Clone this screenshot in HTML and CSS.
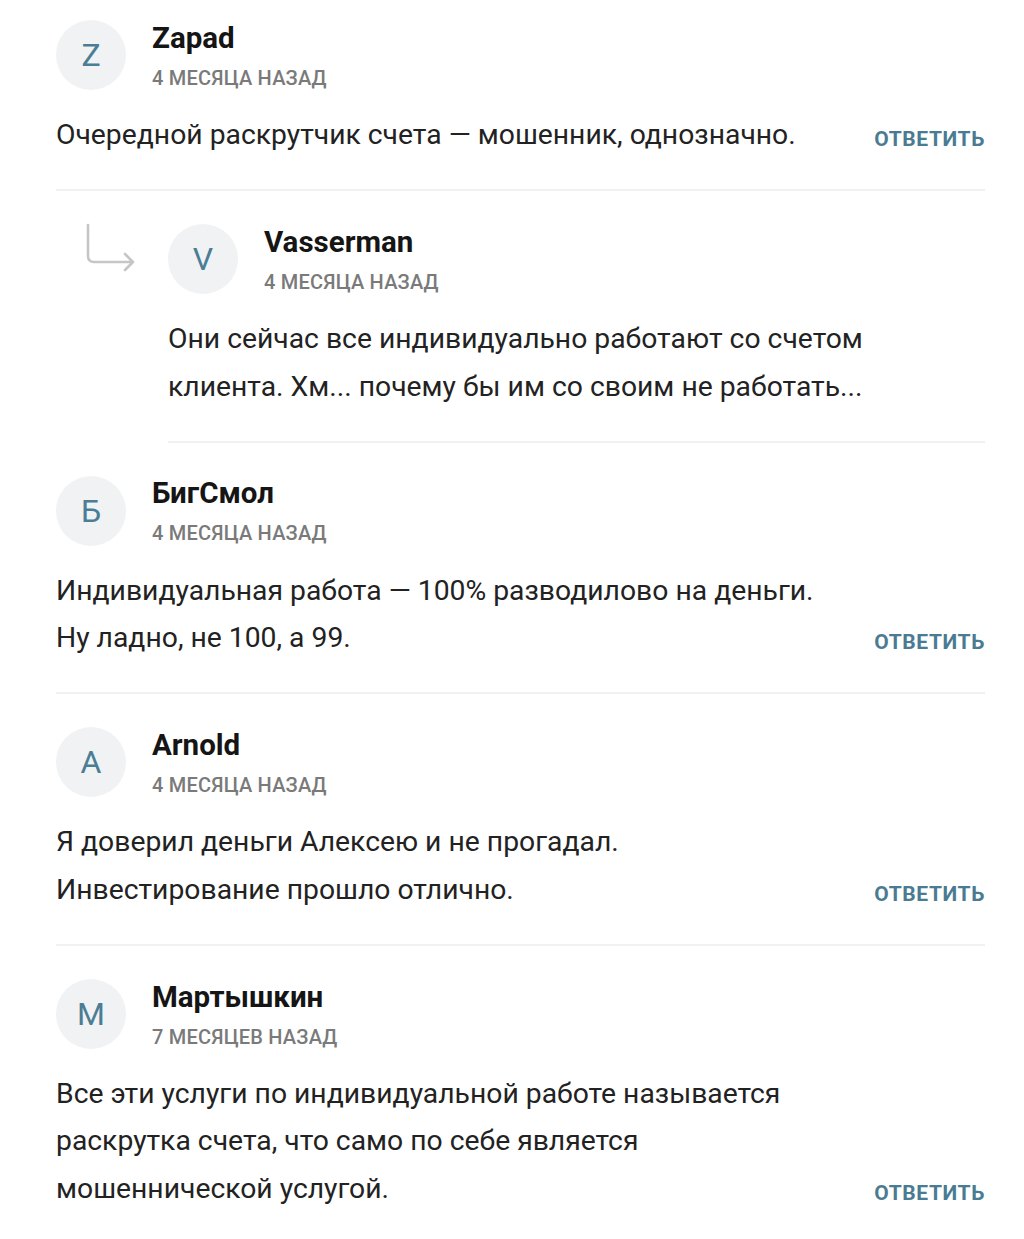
FILE: index.html
```html
<!DOCTYPE html>
<html lang="ru">
<head>
<meta charset="utf-8">
<title>Комментарии</title>
<link rel="stylesheet" href="styles.css">
</head>
<body>
<div class="comments">

  <div class="comment">
    <div class="head">
      <div class="avatar">Z</div>
      <div class="meta">
        <div class="name">Zapad</div>
        <div class="date">4 месяца назад</div>
      </div>
    </div>
    <div class="body">
      <p class="text">Очередной раскрутчик счета — мошенник, однозначно.</p>
      <a class="reply">Ответить</a>
    </div>
  </div>

  <div class="comment child">
    <svg class="arrow" width="54" height="52" viewBox="0 0 54 52">
      <path d="M4 2 V33 Q4 39 10 39 H49 M41 31 L49 39 L41 47" fill="none" stroke="#c6c6c6" stroke-width="2.6" stroke-linecap="round" stroke-linejoin="round"/>
    </svg>
    <div class="head">
      <div class="avatar">V</div>
      <div class="meta">
        <div class="name">Vasserman</div>
        <div class="date">4 месяца назад</div>
      </div>
    </div>
    <div class="body">
      <p class="text">Они сейчас все индивидуально работают со счетом<br>клиента. Хм... почему бы им со своим не работать...</p>
    </div>
  </div>

  <div class="comment">
    <div class="head">
      <div class="avatar">Б</div>
      <div class="meta">
        <div class="name">БигСмол</div>
        <div class="date">4 месяца назад</div>
      </div>
    </div>
    <div class="body">
      <p class="text">Индивидуальная работа — 100% разводилово на деньги.<br>Ну ладно, не 100, а 99.</p>
      <a class="reply">Ответить</a>
    </div>
  </div>

  <div class="comment">
    <div class="head">
      <div class="avatar">A</div>
      <div class="meta">
        <div class="name">Arnold</div>
        <div class="date">4 месяца назад</div>
      </div>
    </div>
    <div class="body">
      <p class="text">Я доверил деньги Алексею и не прогадал.<br>Инвестирование прошло отлично.</p>
      <a class="reply">Ответить</a>
    </div>
  </div>

  <div class="comment last">
    <div class="head">
      <div class="avatar">M</div>
      <div class="meta">
        <div class="name">Мартышкин</div>
        <div class="date">7 месяцев назад</div>
      </div>
    </div>
    <div class="body">
      <p class="text">Все эти услуги по индивидуальной работе называется<br>раскрутка счета, что само по себе является<br>мошеннической услугой.</p>
      <a class="reply">Ответить</a>
    </div>
  </div>

</div>
</body>
</html>
```

FILE: styles.css
```css
* { box-sizing: border-box; }

html, body {
  margin: 0;
  padding: 0;
  background: #ffffff;
}

body {
  font-family: Roboto, "Noto Sans", "Liberation Sans", sans-serif;
  color: #222222;
}

.comments {
  width: 985px;
  padding: 20px 0 0 56px;
}

.comment {
  position: relative;
  padding-bottom: 31px;
  margin-bottom: 33px;
  border-bottom: 2px solid #f1f1f1;
}

.comment.child {
  margin-left: 112px;
}

.comment.last {
  border-bottom: none;
}

.arrow {
  position: absolute;
  left: -84px;
  top: -1px;
}

.head {
  display: flex;
  align-items: center;
  gap: 26px;
}

.avatar {
  width: 70px;
  height: 70px;
  border-radius: 50%;
  background: #f0f2f4;
  color: #4b7d94;
  font-size: 32px;
  display: flex;
  align-items: center;
  justify-content: center;
  flex-shrink: 0;
}

.meta {
  display: flex;
  flex-direction: column;
  gap: 13px;
}

.name {
  font-size: 29.5px;
  font-weight: 700;
  color: #151515;
  line-height: 32px;
}

.date {
  font-size: 20px;
  font-weight: 500;
  color: #7a7a7a;
  text-transform: uppercase;
  line-height: 22px;
  letter-spacing: 0.2px;
}

.body {
  display: flex;
  align-items: flex-end;
  justify-content: space-between;
  margin-top: 21px;
}

.text {
  margin: 0;
  font-size: 28.3px;
  line-height: 47.3px;
  color: #222222;
}

.reply {
  font-size: 21px;
  font-weight: 700;
  color: #4a7b93;
  text-transform: uppercase;
  letter-spacing: 0.6px;
  line-height: 47px;
  margin-bottom: -5px;
}
```
